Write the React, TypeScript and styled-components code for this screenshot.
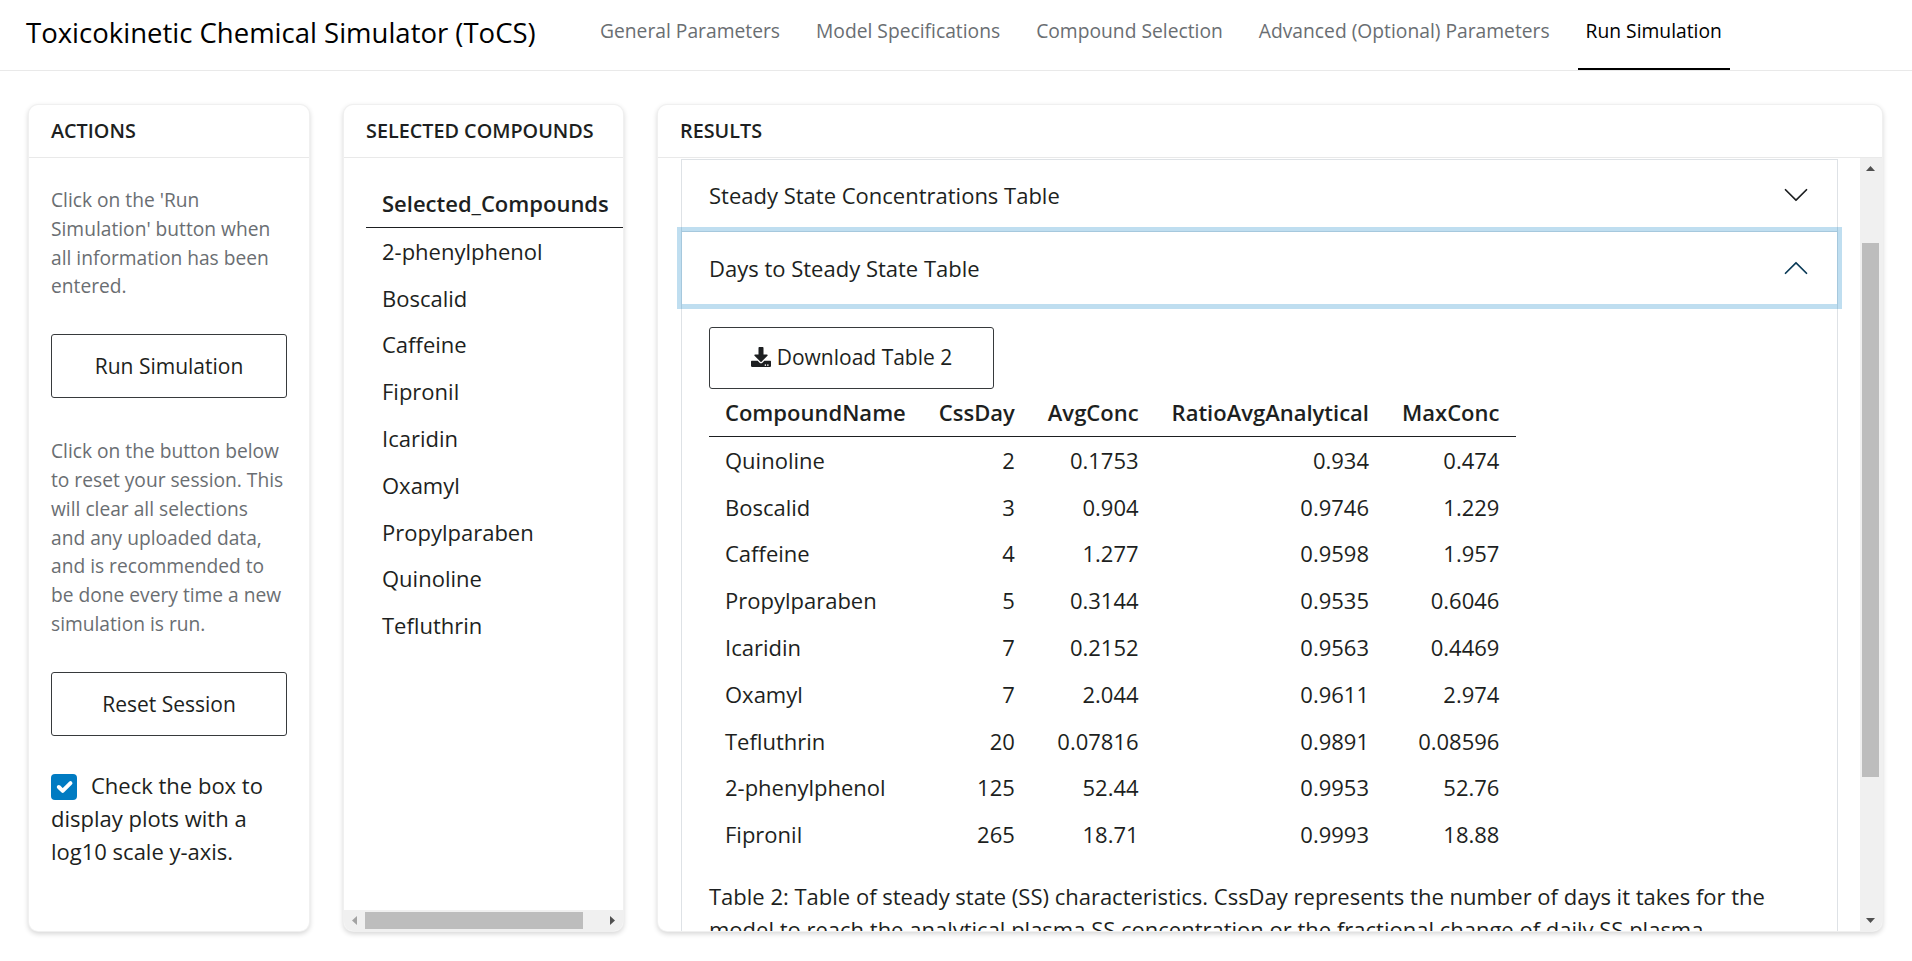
import React from 'react'
import styled, { createGlobalStyle } from 'styled-components'
import { FaDownload } from 'react-icons/fa'

const GlobalStyle = createGlobalStyle`
  html, body {
    margin: 0;
    height: 100%;
    background: #fff;
    overflow: hidden;
  }
  * {
    box-sizing: border-box;
  }
  body {
    font-family: "Open Sans", "Liberation Sans", sans-serif;
    color: #1d1f21;
  }
`

const NAV_ITEMS = [
  'General Parameters',
  'Model Specifications',
  'Compound Selection',
  'Advanced (Optional) Parameters',
  'Run Simulation',
]

const COMPOUNDS = [
  '2-phenylphenol',
  'Boscalid',
  'Caffeine',
  'Fipronil',
  'Icaridin',
  'Oxamyl',
  'Propylparaben',
  'Quinoline',
  'Tefluthrin',
]

const RESULT_ROWS = [
  ['Quinoline', '2', '0.1753', '0.934', '0.474'],
  ['Boscalid', '3', '0.904', '0.9746', '1.229'],
  ['Caffeine', '4', '1.277', '0.9598', '1.957'],
  ['Propylparaben', '5', '0.3144', '0.9535', '0.6046'],
  ['Icaridin', '7', '0.2152', '0.9563', '0.4469'],
  ['Oxamyl', '7', '2.044', '0.9611', '2.974'],
  ['Tefluthrin', '20', '0.07816', '0.9891', '0.08596'],
  ['2-phenylphenol', '125', '52.44', '0.9953', '52.76'],
  ['Fipronil', '265', '18.71', '0.9993', '18.88'],
]

const RESULT_COLUMNS = ['CompoundName', 'CssDay', 'AvgConc', 'RatioAvgAnalytical', 'MaxConc']

const Chevron = ({ up }: { up?: boolean }) => (
  <ChevronIcon viewBox="0 0 16 16" $up={up}>
    <path
      fill="currentColor"
      fillRule="evenodd"
      d="M1.646 4.646a.5.5 0 0 1 .708 0L8 10.293l5.646-5.647a.5.5 0 0 1 .708.708l-6 6a.5.5 0 0 1-.708 0l-6-6a.5.5 0 0 1 0-.708z"
    />
  </ChevronIcon>
)

const Arrow = ({ points, fill = '#505050' }: { points: string; fill?: string }) => (
  <svg width="21" height="21" viewBox="0 0 21 21">
    <polygon points={points} fill={fill} />
  </svg>
)

export default function App() {
  return (
    <>
      <GlobalStyle />
      <Navbar>
        <Title>Toxicokinetic Chemical Simulator (ToCS)</Title>
        <NavList>
          {NAV_ITEMS.map((item) => (
            <NavItem key={item} $active={item === 'Run Simulation'}>
              {item}
            </NavItem>
          ))}
        </NavList>
      </Navbar>

      <Columns>
        <Card>
          <CardHeader>Actions</CardHeader>
          <ActionsBody>
            <Muted>
              Click on the 'Run Simulation' button when all information has been entered.
            </Muted>
            <ActionButton>Run Simulation</ActionButton>
            <Muted>
              Click on the button below to reset your session. This will clear all selections
              and any uploaded data, and is recommended to be done every time a new simulation
              is run.
            </Muted>
            <ActionButton>Reset Session</ActionButton>
            <CheckLabel>
              <CheckBox>
                <svg viewBox="0 0 20 20" width="26" height="26">
                  <path
                    d="m6 10 3 3 6-6"
                    fill="none"
                    stroke="#fff"
                    strokeWidth="3"
                    strokeLinecap="round"
                    strokeLinejoin="round"
                  />
                </svg>
              </CheckBox>
              Check the box to display plots with a log10 scale y-axis.
            </CheckLabel>
          </ActionsBody>
        </Card>

        <Card>
          <CardHeader>Selected Compounds</CardHeader>
          <CompoundsBody>
            <DataTable>
              <thead>
                <tr>
                  <HeadCell>Selected_Compounds</HeadCell>
                </tr>
              </thead>
              <tbody>
                {COMPOUNDS.map((name) => (
                  <tr key={name}>
                    <BodyCell>{name}</BodyCell>
                  </tr>
                ))}
              </tbody>
            </DataTable>
          </CompoundsBody>
          <HorizontalBar>
            <Arrow points="13,6 13,15 8,10.5" fill="#a3a3a3" />
            <HorizontalThumb />
            <BarSpacer />
            <Arrow points="8,6 8,15 13,10.5" />
          </HorizontalBar>
        </Card>

        <Card>
          <CardHeader>Results</CardHeader>
          <ResultsRow>
            <ResultsBody>
              <Accordion>
                <AccordionItem>
                  <AccordionHeader>
                    Steady State Concentrations Table
                    <Chevron />
                  </AccordionHeader>
                </AccordionItem>
                <AccordionItem>
                  <AccordionHeader $open>
                    Days to Steady State Table
                    <Chevron up />
                  </AccordionHeader>
                  <AccordionBody>
                    <DownloadButton>
                      <FaDownload size={20} />
                      Download Table 2
                    </DownloadButton>
                    <DataTable>
                      <thead>
                        <tr>
                          {RESULT_COLUMNS.map((col, i) => (
                            <HeadCell key={col} $right={i > 0}>
                              {col}
                            </HeadCell>
                          ))}
                        </tr>
                      </thead>
                      <tbody>
                        {RESULT_ROWS.map((row) => (
                          <tr key={row[0]}>
                            {row.map((value, i) => (
                              <BodyCell key={i} $right={i > 0}>
                                {value}
                              </BodyCell>
                            ))}
                          </tr>
                        ))}
                      </tbody>
                    </DataTable>
                    <Caption>
                      Table 2: Table of steady state (SS) characteristics. CssDay represents the
                      number of days it takes for the model to reach the analytical plasma SS
                      concentration or the fractional change of daily SS plasma concentration.
                    </Caption>
                  </AccordionBody>
                </AccordionItem>
              </Accordion>
            </ResultsBody>
            <VerticalBar>
              <Arrow points="6,13 15,13 10.5,8" />
              <VerticalThumb />
              <BarSpacer />
              <Arrow points="6,8 15,8 10.5,13" />
            </VerticalBar>
          </ResultsRow>
        </Card>
      </Columns>
    </>
  )
}

const Navbar = styled.header`
  display: flex;
  align-items: center;
  height: 71px;
  padding-left: 26px;
  border-bottom: 1px solid #e9e9e9;
`

const Title = styled.div`
  width: 566px;
  padding-bottom: 6px;
  font-size: 27.5px;
  line-height: 1.2;
  color: #000;
  white-space: nowrap;
`

const NavList = styled.nav`
  display: flex;
  gap: 20px;
  height: 70px;
`

const NavItem = styled.div<{ $active?: boolean }>`
  display: flex;
  align-items: center;
  padding: 0 8px 8px;
  font-size: 19.25px;
  white-space: nowrap;
  color: ${(p) => (p.$active ? '#000' : '#6a6e72')};
  border-bottom: 2px solid ${(p) => (p.$active ? '#000' : 'transparent')};
`

const Columns = styled.main`
  display: grid;
  grid-template-columns: 282px 281px 1226px;
  gap: 33px;
  height: 828px;
  margin: 33px 0 0 28px;
`

const Card = styled.section`
  display: flex;
  flex-direction: column;
  min-height: 0;
  min-width: 0;
  overflow: hidden;
  background: #fff;
  border: 1px solid rgba(0, 0, 0, 0.06);
  border-radius: 10px;
  box-shadow: 0 2px 5px rgba(0, 0, 0, 0.16);
`

const CardHeader = styled.h2`
  flex: none;
  height: 53px;
  margin: 0;
  padding: 0 22px;
  font-size: 19.8px;
  font-weight: 600;
  line-height: 52px;
  text-transform: uppercase;
  color: #1d1f21;
  border-bottom: 1px solid #e9e9e9;
`

const ActionsBody = styled.div`
  flex: 1;
  padding: 28px 22px;
`

const Muted = styled.p`
  margin: 0;
  font-size: 19.2px;
  line-height: 28.8px;
  color: #6a6e72;
  button + & {
    margin-top: 39px;
  }
`

const ActionButton = styled.button`
  display: block;
  width: 236px;
  height: 64px;
  margin: 33px 0;
  font: inherit;
  font-size: 21px;
  color: #1d1f21;
  background: #fff;
  border: 1px solid #373a3c;
  border-radius: 3px;
`

const CheckLabel = styled.div`
  font-size: 22px;
  line-height: 33px;
  color: #1d1f21;
`

const CheckBox = styled.span`
  display: inline-block;
  width: 26px;
  height: 26px;
  margin-right: 14px;
  vertical-align: -6px;
  background: #007bc2;
  border-radius: 4px;
  svg {
    display: block;
  }
`

const CompoundsBody = styled.div`
  flex: 1;
  min-height: 0;
  padding: 22px 0 0 22px;
  overflow: hidden;
`

const DataTable = styled.table`
  border-collapse: collapse;
  font-size: 22px;
  line-height: 30.8px;
`

const HeadCell = styled.th<{ $right?: boolean }>`
  padding: 8px 16.5px 8px ${(p) => (p.$right ? '16.5px' : '16px')};
  font-weight: 600;
  white-space: nowrap;
  text-align: ${(p) => (p.$right ? 'right' : 'left')};
  border-bottom: 1.5px solid #1d1f21;
`

const BodyCell = styled.td<{ $right?: boolean }>`
  padding: 8px 16.5px 8px ${(p) => (p.$right ? '16.5px' : '16px')};
  white-space: nowrap;
  text-align: ${(p) => (p.$right ? 'right' : 'left')};
`

const HorizontalBar = styled.div`
  flex: none;
  display: flex;
  align-items: center;
  height: 21px;
  background: #f0f0f0;
  svg {
    flex: none;
  }
`

const HorizontalThumb = styled.div`
  flex: none;
  width: 218px;
  height: 17px;
  background: #bdbdbd;
`

const BarSpacer = styled.div`
  flex: 1;
`

const ResultsRow = styled.div`
  flex: 1;
  min-height: 0;
  display: flex;
`

const ResultsBody = styled.div`
  flex: 1;
  min-width: 0;
  padding: 1px 22px 0 23px;
  overflow: hidden;
`

const VerticalBar = styled.div`
  flex: none;
  display: flex;
  flex-direction: column;
  align-items: center;
  width: 22px;
  padding-right: 1px;
  background: #f0f0f0;
  svg {
    flex: none;
  }
`

const VerticalThumb = styled.div`
  flex: none;
  width: 17px;
  height: 534px;
  margin-top: 64px;
  background: #bdbdbd;
`

const Accordion = styled.div`
  border: 1px solid #dee2e6;
  border-bottom: 0;
`

const AccordionItem = styled.div`
  & + & {
    border-top: 1px solid #dee2e6;
  }
`

const AccordionHeader = styled.div<{ $open?: boolean }>`
  position: relative;
  z-index: 1;
  display: flex;
  align-items: center;
  justify-content: space-between;
  height: ${(p) => (p.$open ? '72px' : '71px')};
  padding: 0 27px ${(p) => (p.$open ? '0' : '1px')};
  font-size: 22px;
  color: #1d1f21;
  box-shadow: ${(p) => (p.$open ? '0 0 0 5px rgba(0, 123, 194, 0.25)' : 'none')};
  svg {
    color: ${(p) => (p.$open ? '#0a3a57' : '#1d1f21')};
  }
`

const ChevronIcon = styled.svg<{ $up?: boolean }>`
  flex: none;
  width: 28px;
  height: 28px;
  transform: ${(p) => (p.$up ? 'rotate(180deg)' : 'none')};
`

const AccordionBody = styled.div`
  padding: 23px 28px 16px 27px;
`

const DownloadButton = styled.button`
  display: flex;
  align-items: center;
  justify-content: center;
  gap: 6px;
  width: 285px;
  height: 62px;
  padding: 0 0 2px;
  font: inherit;
  font-size: 21px;
  color: #1d1f21;
  background: #fff;
  border: 1px solid #373a3c;
  border-radius: 3px;
`

const Caption = styled.p`
  margin: 22px 0 0;
  font-size: 22px;
  line-height: 33px;
  color: #1d1f21;
`
